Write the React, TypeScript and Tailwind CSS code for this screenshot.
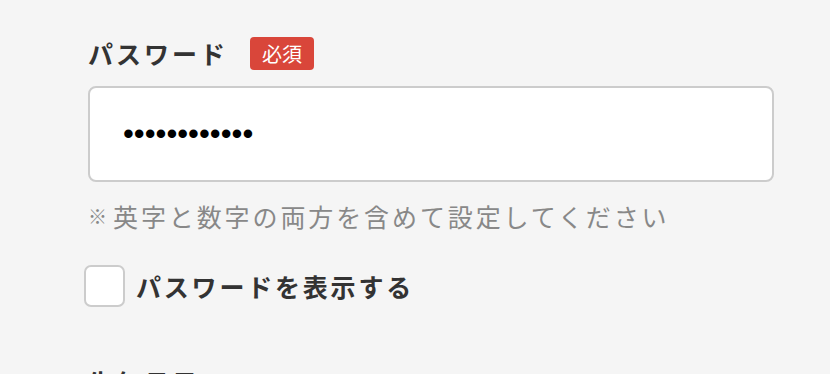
import { useState } from "react";

const jp = { fontFamily: '"Noto Sans CJK JP", "Noto Sans", sans-serif' };

export default function App() {
  const [show, setShow] = useState(false);

  return (
    <div className="h-[374px] w-full overflow-hidden bg-[#f5f5f5] pl-[88px] pr-[56px] pt-[37px]" style={jp}>
      {/* パスワード */}
      <div className="flex h-[33px] items-center gap-[22px]">
        <span className="text-[25px] font-bold leading-none tracking-[3px] text-[#333]">パスワード</span>
        <span className="flex h-[33px] w-[64px] items-center justify-center rounded-[4px] bg-[#d9463a] text-[20px] leading-none text-white">
          必須
        </span>
      </div>

      <input
        type={show ? "text" : "password"}
        defaultValue="abcdef123456"
        className="mt-[16px] block h-[96px] w-full rounded-[8px] border-2 border-[#cccccc] bg-white pl-[33px] text-[31px] text-black outline-none"
        style={{ fontFamily: '"Liberation Sans", sans-serif' }}
      />

      <p className="mt-[21px] flex items-center text-[25px] leading-[26px] text-[#888]">
        <span className="mr-[6px] text-[19px] font-bold">※</span>
        <span className="tracking-[2.9px]">英字と数字の両方を含めて設定してください</span>
      </p>

      <label className="mt-[36px] -ml-[4px] flex cursor-pointer items-center gap-[11px]">
        <span className="flex h-[42px] w-[41px] items-center justify-center rounded-[7px] border-2 border-[#cccccc] bg-white">
          <input
            type="checkbox"
            checked={show}
            onChange={(e) => setShow(e.target.checked)}
            className="sr-only"
          />
          {show && <span className="text-[22px] leading-none text-[#333]">✓</span>}
        </span>
        <span className="text-[25px] font-bold leading-none tracking-[2.8px] text-[#333]">パスワードを表示する</span>
      </label>

      <div className="mt-[63px] text-[25px] font-bold leading-none tracking-[3px] text-[#333]">生年月日</div>
    </div>
  );
}
